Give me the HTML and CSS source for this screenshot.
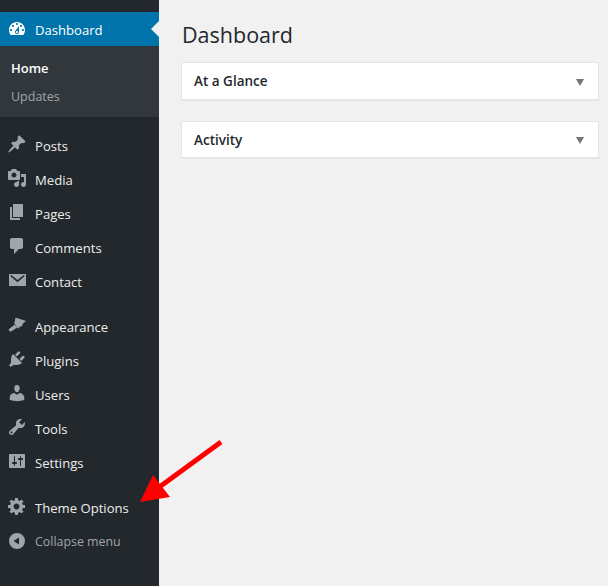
FILE: index.html
```html
<!DOCTYPE html>
<html lang="en">
<head>
<meta charset="utf-8">
<title>Dashboard</title>
<link rel="stylesheet" href="styles.css">
</head>
<body>
<div class="app">
  <nav class="sidebar">
    <a class="item current"><svg class="icon" viewBox="0 0 20 20"><path d="M3.76 16h12.48c1.1-1.37 1.76-3.11 1.76-5 0-4.42-3.58-8-8-8s-8 3.58-8 8c0 1.89.66 3.63 1.76 5zM10 4c.55 0 1 .45 1 1s-.45 1-1 1-1-.45-1-1 .45-1 1-1zM6 6c.55 0 1 .45 1 1s-.45 1-1 1-1-.45-1-1 .45-1 1-1zm8 0c.55 0 1 .45 1 1s-.45 1-1 1-1-.45-1-1 .45-1 1-1zm-5.37 5.55L12 7v6c0 1.1-.9 2-2 2s-2-.9-2-2c0-.57.24-1.08.63-1.45zM4 10c.55 0 1 .45 1 1s-.45 1-1 1-1-.45-1-1 .45-1 1-1zm12 0c.55 0 1 .45 1 1s-.45 1-1 1-1-.45-1-1 .45-1 1-1zm-5 3c0-.55-.45-1-1-1s-1 .45-1 1 .45 1 1 1 1-.45 1-1z" fill-rule="evenodd"/></svg><span>Dashboard</span></a>
    <div class="submenu">
      <a class="subitem active">Home</a>
      <a class="subitem">Updates</a>
    </div>
    <div class="group">
      <a class="item"><svg class="icon" viewBox="0 0 20 20"><path d="M10.44 3.02l1.82-1.82 6.36 6.35-1.83 1.82c-1.05-.68-2.48-.57-3.41.36l-.75.75c-.92.93-1.04 2.35-.35 3.41l-1.83 1.82-2.41-2.41-2.8 2.79c-.42.42-3.38 2.71-3.8 2.29s1.86-3.39 2.28-3.81l2.79-2.79L4.1 9.36l1.83-1.82c1.05.69 2.48.57 3.4-.36l.75-.75c.93-.92 1.05-2.35.36-3.41z"/></svg><span>Posts</span></a>
      <a class="item"><svg class="icon" viewBox="0 0 20 20"><path d="M13 11V4c0-.55-.45-1-1-1h-1.67L9 1H5L3.67 3H2c-.55 0-1 .45-1 1v7c0 .55.45 1 1 1h10c.55 0 1-.45 1-1zM7 4.5c1.38 0 2.5 1.12 2.5 2.5S8.38 9.5 7 9.5 4.5 8.38 4.5 7 5.62 4.5 7 4.5zM14 6h5v10.5c0 1.38-1.12 2.5-2.5 2.5S14 17.88 14 16.5s1.12-2.5 2.5-2.5c.17 0 .34.02.5.05V9h-3V6zm-4 8.05V13h2v3.5c0 1.38-1.12 2.5-2.5 2.5S7 17.88 7 16.5 8.12 14 9.5 14c.17 0 .34.02.5.05z"/></svg><span>Media</span></a>
      <a class="item"><svg class="icon" viewBox="0 0 20 20"><path d="M6 15V2h10v13H6zm-1 1h8v2H3V5h2v11z"/></svg><span>Pages</span></a>
      <a class="item"><svg class="icon" viewBox="0 0 20 20"><path d="M5 2h9c1.1 0 2 .9 2 2v7c0 1.1-.9 2-2 2h-2l-5 5v-5H5c-1.1 0-2-.9-2-2V4c0-1.1.9-2 2-2z"/></svg><span>Comments</span></a>
      <a class="item"><svg class="icon" viewBox="0 0 20 20"><path d="M2 4h17v12H2zm8.5 8.2L17.5 6.2V5.2h-1L10.5 10 4.5 5.2h-1v1z" fill-rule="evenodd"/></svg><span>Contact</span></a>
    </div>
    <div class="group">
      <a class="item"><svg class="icon" viewBox="0 0 20 20"><path d="M8.500 2.500L19 6l-3 2.500-1 2.500-2.500 1-1 1.800-4.200-5zM2 14l5.500-4.200 2.800 2.800L5 16c-1.500 1-4 0-3-2z"/></svg><span>Appearance</span></a>
      <a class="item"><svg class="icon" viewBox="0 0 20 20"><path d="M13.11 4.36L9.87 7.6 8 5.73l3.24-3.24c.35-.34 1.05-.2 1.56.32.52.51.66 1.21.31 1.55zm-8 1.77l.91-1.12 9.01 9.01-1.19.84c-.71.71-2.63 1.16-3.82 1.16H6.14L4.9 17.26c-.59.59-1.54.59-2.12 0-.59-.58-.59-1.53 0-2.12l1.24-1.24v-3.88c0-1.13.4-3.19 1.09-3.89zm7.26 3.97l3.24-3.24c.34-.35 1.04-.21 1.55.31.52.51.66 1.21.31 1.55l-3.24 3.25z"/></svg><span>Plugins</span></a>
      <a class="item"><svg class="icon" viewBox="0 0 20 20"><path d="M10 9.25c-2.27 0-2.73-3.44-2.73-3.44C7 4.02 7.82 2 9.97 2c2.16 0 2.98 2.02 2.71 3.81 0 0-.41 3.44-2.68 3.44zm0 2.57L12.72 10c2.39 0 4.52 2.33 4.52 4.53v2.49s-3.65 1.13-7.24 1.13c-3.65 0-7.24-1.13-7.24-1.13v-2.49c0-2.25 1.94-4.48 4.47-4.48z"/></svg><span>Users</span></a>
      <a class="item"><svg class="icon" viewBox="0 0 20 20"><path d="M16.68 9.77c-1.34 1.34-3.3 1.67-4.95.99l-5.41 6.52c-.99.99-2.59.99-3.58 0s-.99-2.59 0-3.57l6.52-5.42c-.68-1.65-.35-3.61.99-4.95 1.28-1.28 3.12-1.62 4.72-1.06l-2.89 2.89 2.82 2.82 2.86-2.87c.53 1.58.18 3.39-1.08 4.65zM3.81 16.21c.4.39 1.04.39 1.43 0 .4-.4.4-1.04 0-1.43-.39-.4-1.03-.4-1.43 0-.39.39-.39 1.03 0 1.43z"/></svg><span>Tools</span></a>
      <a class="item"><svg class="icon" viewBox="0 0 20 20"><path d="M18 16V4c0-.55-.45-1-1-1H3c-.55 0-1 .45-1 1v12c0 .55.45 1 1 1h14c.55 0 1-.45 1-1zM8 11h1c.55 0 1 .45 1 1s-.45 1-1 1H8v1.5c0 .28-.22.5-.5.5s-.5-.22-.5-.5V13H6c-.55 0-1-.45-1-1s.45-1 1-1h1V5.5c0-.28.22-.5.5-.5s.5.22.5.5V11zm5-2h-1c-.55 0-1-.45-1-1s.45-1 1-1h1V5.5c0-.28.22-.5.5-.5s.5.22.5.5V7h1c.55 0 1 .45 1 1s-.45 1-1 1h-1v5.5c0 .28-.22.5-.5.5s-.5-.22-.5-.5V9z"/></svg><span>Settings</span></a>
    </div>
    <div class="group">
      <a class="item"><svg class="icon" viewBox="0 0 20 20"><path d="M18 12h-2.180c-.17.7-.44 1.35-.81 1.93l1.54 1.54-2.1 2.1-1.54-1.54c-.58.36-1.23.63-1.91.79V19H8v-2.18c-.68-.16-1.33-.43-1.91-.79l-1.54 1.54-2.12-2.12 1.54-1.54c-.36-.58-.63-1.23-.79-1.91H1V9.03h2.17c.16-.7.44-1.35.8-1.94L2.43 5.55l2.1-2.1 1.54 1.54c.58-.37 1.24-.64 1.93-.81V2h3v2.18c.68.16 1.33.43 1.91.79l1.54-1.54 2.12 2.12-1.54 1.54c.36.59.64 1.24.8 1.94H18V12zm-8.5 1.5c1.66 0 3-1.34 3-3s-1.34-3-3-3-3 1.34-3 3 1.34 3 3 3z" fill-rule="evenodd"/></svg><span>Theme Options</span></a>
      <a class="item collapse"><svg class="icon" viewBox="0 0 20 20"><path d="M10 2a8 8 0 1 1 0 16 8 8 0 0 1 0-16zm2 4.500L6.500 10l5.500 3.500z" fill-rule="evenodd"/></svg><span>Collapse menu</span></a>
    </div>
  </nav>
  <main class="main">
    <h1 class="title">Dashboard</h1>
    <section class="box"><h2 class="box-title">At a Glance</h2><i class="caret"></i></section>
    <section class="box box-short"><h2 class="box-title">Activity</h2><i class="caret"></i></section>
  </main>
  <svg class="arrow" viewBox="0 0 608 586"><line x1="221" y1="442" x2="158" y2="488" stroke="#ff0000" stroke-width="5"/><polygon points="140,502 153,475 170,497" fill="#ff0000"/></svg>
</div>
</body>
</html>
```
FILE: styles.css
```css
* { box-sizing: border-box; }
html, body { margin: 0; padding: 0; }
body {
  font-family: "Open Sans", "Noto Sans", sans-serif;
  font-size: 13px;
  color: #23282d;
  background: #f1f1f1;
}
.app {
  position: relative;
  display: flex;
  width: 608px;
  height: 586px;
  overflow: hidden;
}
.sidebar {
  width: 159px;
  flex: none;
  background: #23282d;
  padding-top: 12px;
}
.item {
  position: relative;
  display: flex;
  align-items: center;
  height: 34px;
  padding-left: 7px;
  color: #eeeeee;
  font-size: 13.1px;
}
.item span { margin-left: 8px; padding-top: 2px; }
.icon { width: 20px; height: 20px; margin-bottom: 2px; fill: #a0a5aa; flex: none; }
.current { background: #0073aa; color: #ffffff; }
.current .icon { fill: #ffffff; margin-bottom: 0; }
.current::after {
  content: "";
  position: absolute;
  right: 0;
  top: 9px;
  border: 8px solid transparent;
  border-right-color: #f1f1f1;
  border-left-width: 0;
}
.submenu {
  background: #32373c;
  height: 71px;
  padding-top: 8px;
}
.subitem {
  display: block;
  height: 28px;
  line-height: 30px;
  padding-left: 11px;
  font-size: 12.5px;
  color: #a0a5aa;
}
.subitem.active { color: #ffffff; font-weight: 600; font-size: 13px; line-height: 28px; }
.group { padding-top: 11px; }
.group:first-of-type { padding-top: 12px; }
.collapse { color: #a0a5aa; font-size: 12.4px; }
.collapse .icon { margin-bottom: 0; }
.collapse span { padding-top: 0; }
.main { flex: 1; padding: 0 9px 0 22px; }
.title {
  margin: 0;
  padding: 20px 0 0 1px;
  font-size: 21.500px;
  line-height: 30px;
  font-weight: 400;
  color: #23282d;
  height: 62px;
}
.box {
  display: flex;
  align-items: center;
  justify-content: space-between;
  height: 38px;
  margin-bottom: 21px;
  padding: 0 14px 0 12px;
  background: #ffffff;
  border: 1px solid #e5e5e5;
  box-shadow: 0 1px 1px rgba(0, 0, 0, 0.04);
}
.box-short { height: 37px; }
.box-title { margin: 0; font-size: 13.5px; font-weight: 600; color: #23282d; }
.caret {
  width: 0;
  height: 0;
  margin-top: 2px;
  border-left: 4.5px solid transparent;
  border-right: 4.5px solid transparent;
  border-top: 7px solid #72777c;
}
.arrow {
  position: absolute;
  left: 0;
  top: 0;
  width: 608px;
  height: 586px;
  pointer-events: none;
}
```
